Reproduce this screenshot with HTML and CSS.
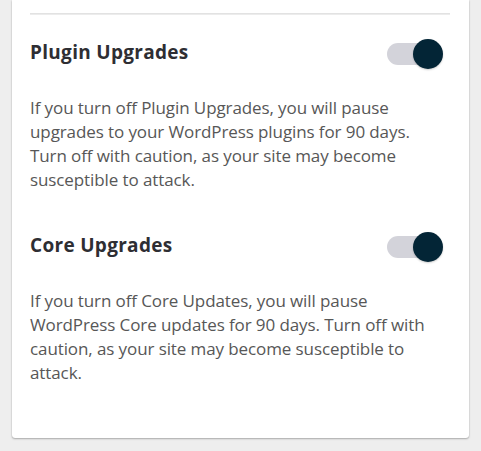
FILE: index.html
```html
<!DOCTYPE html>
<html lang="en">
<head>
<meta charset="utf-8">
<title>Upgrades</title>
<link rel="stylesheet" href="styles.css">
</head>
<body>
<div class="card">
  <div class="divider"></div>
  <section class="setting">
    <div class="setting-head">
      <h3 class="setting-title">Plugin Upgrades</h3>
      <span class="toggle is-on" role="switch" aria-checked="true"><span class="toggle-track"></span><span class="toggle-thumb"></span></span>
    </div>
    <p class="setting-desc">If you turn off Plugin Upgrades, you will pause upgrades to your WordPress plugins for 90 days. Turn off with caution, as your site may become susceptible to attack.</p>
  </section>
  <section class="setting">
    <div class="setting-head">
      <h3 class="setting-title">Core Upgrades</h3>
      <span class="toggle is-on" role="switch" aria-checked="true"><span class="toggle-track"></span><span class="toggle-thumb"></span></span>
    </div>
    <p class="setting-desc">If you turn off Core Updates, you will pause WordPress Core updates for 90 days. Turn off with caution, as your site may become susceptible to attack.</p>
  </section>
</div>
</body>
</html>
```

FILE: styles.css
```css
html, body {
  margin: 0;
  padding: 0;
  background: #eeeeee;
  height: 100%;
}

body {
  font-family: "Open Sans", "Noto Sans", sans-serif;
  overflow: hidden;
}

.card {
  margin: 0 12px;
  background: #ffffff;
  padding: 13px 19px 53px 18px;
  box-shadow: 0 1px 2px rgba(0, 0, 0, 0.28), 0 0 1px rgba(0, 0, 0, 0.2);
  border-radius: 0 0 3px 3px;
}

.divider {
  height: 1px;
  background: #e2e2e2;
  border-bottom: 1px solid #ececec;
}

.setting {
  display: flex;
  flex-direction: column;
}

.setting:first-of-type {
  margin-top: 20.5px;
}

.setting + .setting {
  margin-top: 37px;
}

.setting-head {
  display: flex;
  justify-content: space-between;
  align-items: flex-start;
}

.setting-title {
  margin: 0;
  font-size: 19px;
  line-height: 32px;
  font-weight: 700;
  letter-spacing: 0.3px;
  color: #2e2e33;
}

.toggle {
  position: relative;
  display: block;
  width: 56px;
  height: 30px;
  margin-top: 3.5px;
  margin-right: 7px;
}

.toggle-track {
  position: absolute;
  left: 0;
  right: 3px;
  top: 4px;
  height: 22px;
  border-radius: 11px;
  background: #d3d3da;
}

.toggle-thumb {
  position: absolute;
  right: 0;
  top: 0;
  width: 30px;
  height: 30px;
  border-radius: 50%;
  background: #032536;
  box-shadow: 0 1px 2px rgba(0, 0, 0, 0.2);
}

.setting-desc {
  margin: 26.5px 0 0;
  font-size: 17px;
  line-height: 24px;
  letter-spacing: -0.1px;
  color: #575757;
}
```
